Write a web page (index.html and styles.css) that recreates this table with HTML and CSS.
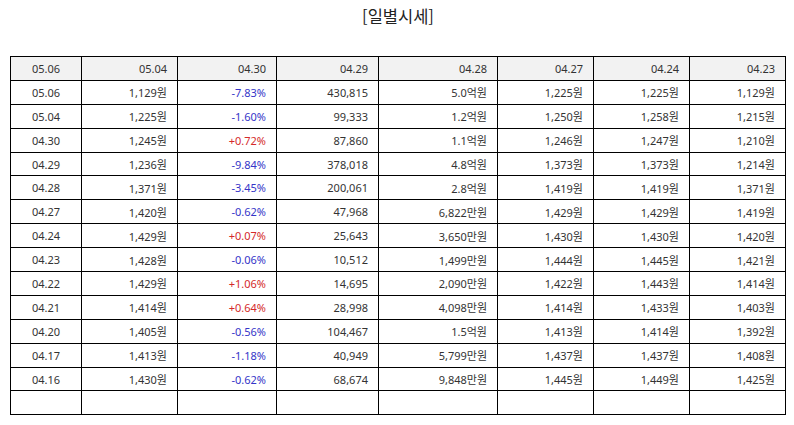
FILE: index.html
```html
<!DOCTYPE html>
<html lang="ko">
<head>
<meta charset="utf-8">
<title>일별시세</title>
<link rel="stylesheet" href="styles.css">
</head>
<body>
<div class="page">
  <h3 class="title">[일별시세]</h3>
  <table class="quotes">
    <colgroup>
      <col class="c1"><col class="c2"><col class="c3"><col class="c4"><col class="c5"><col class="c6"><col class="c7"><col class="c8">
    </colgroup>
    <thead>
      <tr><th class="date">05.06</th><th>05.04</th><th>04.30</th><th>04.29</th><th>04.28</th><th>04.27</th><th>04.24</th><th>04.23</th></tr>
    </thead>
    <tbody>
      <tr><td class="date">05.06</td><td>1,129원</td><td class="dn">-7.83%</td><td>430,815</td><td>5.0억원</td><td>1,225원</td><td>1,225원</td><td>1,129원</td></tr>
      <tr><td class="date">05.04</td><td>1,225원</td><td class="dn">-1.60%</td><td>99,333</td><td>1.2억원</td><td>1,250원</td><td>1,258원</td><td>1,215원</td></tr>
      <tr><td class="date">04.30</td><td>1,245원</td><td class="up">+0.72%</td><td>87,860</td><td>1.1억원</td><td>1,246원</td><td>1,247원</td><td>1,210원</td></tr>
      <tr><td class="date">04.29</td><td>1,236원</td><td class="dn">-9.84%</td><td>378,018</td><td>4.8억원</td><td>1,373원</td><td>1,373원</td><td>1,214원</td></tr>
      <tr><td class="date">04.28</td><td>1,371원</td><td class="dn">-3.45%</td><td>200,061</td><td>2.8억원</td><td>1,419원</td><td>1,419원</td><td>1,371원</td></tr>
      <tr><td class="date">04.27</td><td>1,420원</td><td class="dn">-0.62%</td><td>47,968</td><td>6,822만원</td><td>1,429원</td><td>1,429원</td><td>1,419원</td></tr>
      <tr><td class="date">04.24</td><td>1,429원</td><td class="up">+0.07%</td><td>25,643</td><td>3,650만원</td><td>1,430원</td><td>1,430원</td><td>1,420원</td></tr>
      <tr><td class="date">04.23</td><td>1,428원</td><td class="dn">-0.06%</td><td>10,512</td><td>1,499만원</td><td>1,444원</td><td>1,445원</td><td>1,421원</td></tr>
      <tr><td class="date">04.22</td><td>1,429원</td><td class="up">+1.06%</td><td>14,695</td><td>2,090만원</td><td>1,422원</td><td>1,443원</td><td>1,414원</td></tr>
      <tr><td class="date">04.21</td><td>1,414원</td><td class="up">+0.64%</td><td>28,998</td><td>4,098만원</td><td>1,414원</td><td>1,433원</td><td>1,403원</td></tr>
      <tr><td class="date">04.20</td><td>1,405원</td><td class="dn">-0.56%</td><td>104,467</td><td>1.5억원</td><td>1,413원</td><td>1,414원</td><td>1,392원</td></tr>
      <tr><td class="date">04.17</td><td>1,413원</td><td class="dn">-1.18%</td><td>40,949</td><td>5,799만원</td><td>1,437원</td><td>1,437원</td><td>1,408원</td></tr>
      <tr><td class="date">04.16</td><td>1,430원</td><td class="dn">-0.62%</td><td>68,674</td><td>9,848만원</td><td>1,445원</td><td>1,449원</td><td>1,425원</td></tr>
      <tr><td class="date"></td><td></td><td></td><td></td><td></td><td></td><td></td><td></td></tr>
    </tbody>
  </table>
</div>
</body>
</html>
```

FILE: styles.css
```css
html, body {
  margin: 0;
  padding: 0;
  background: #fff;
}

.page {
  padding: 4px 8px 0 10px;
  font-family: "Noto Sans", "Noto Sans CJK KR", sans-serif;
  color: #333;
}

.title {
  margin: 0;
  height: 25px;
  line-height: 25px;
  text-align: center;
  font-family: "Noto Sans CJK KR", sans-serif;
  font-size: 16.5px;
  font-weight: normal;
  color: #222;
}

.quotes {
  margin-top: 27px;
  width: 776px;
  border-collapse: collapse;
  table-layout: fixed;
  font-size: 11px;
}

.c1 { width: 71px; }
.c2 { width: 96px; }
.c3 { width: 99px; }
.c4 { width: 102px; }
.c5 { width: 119px; }
.c6 { width: 96px; }
.c7 { width: 96px; }
.c8 { width: 96px; }

.quotes th,
.quotes td {
  border: 1px solid #000;
  height: 22.9px;
  padding: 0 10px 0 4px;
  text-align: right;
  font-weight: normal;
  white-space: nowrap;
  color: #333;
}

.quotes th {
  background: #f2f2f2;
}

.quotes .date {
  text-align: center;
  padding: 0;
}

.quotes .dn { color: #3535c8; }
.quotes .up { color: #d42a2a; }
```
